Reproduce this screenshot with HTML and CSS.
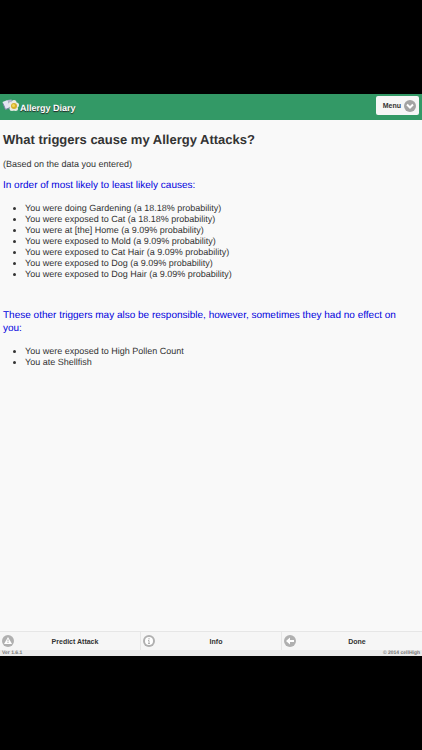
FILE: index.html
```
<!DOCTYPE html>
<html lang="en">
<head>
<meta charset="utf-8">
<meta name="viewport" content="width=device-width, initial-scale=1">
<title>Allergy Diary</title>
<link rel="stylesheet" href="styles.css">
</head>

<body>
<div class="page">
	<header class="header">
		<div class="brand">
			<svg class="logo" viewBox="0 0 34 28" aria-hidden="true">
				<path d="M1 6l10-4 6 14-10 5z" fill="#e4e6f3"/>
				<path d="M2 9l5 12 10-4" fill="none" stroke="#7f81a8" stroke-width="2"/>
				<path d="M11 2l8-1 3 12-6 4z" fill="#b7b3cf"/>
				<g fill="#e9ebe4">
					<circle cx="24" cy="7" r="5"/>
					<circle cx="29" cy="12" r="5"/>
					<circle cx="27" cy="19" r="5"/>
					<circle cx="20" cy="19" r="5"/>
					<circle cx="18" cy="11" r="5"/>
				</g>
				<circle cx="24" cy="14" r="6" fill="#d4b02a"/>
				<circle cx="23" cy="13" r="3" fill="#f2d95c"/>
			</svg>
			<span>Allergy Diary</span>
		</div>
		<button type="button" class="menu">
			<span>Menu</span>
			<svg class="icon" viewBox="0 0 24 24" aria-hidden="true">
				<circle cx="12" cy="12" r="12" fill="#a3a3a3"/>
				<path d="M6 9l6 6 6-6" fill="none" stroke="#fff" stroke-width="4"/>
			</svg>
		</button>
	</header>
	<main class="content">
		<h1>What triggers cause my Allergy Attacks?</h1>
		<p class="note">(Based on the data you entered)</p>
		<h2>In order of most likely to least likely causes:</h2>
		<ul class="likely">
			<li>You were doing Gardening (a 18.18% probability)</li>
			<li>You were exposed to Cat (a 18.18% probability)</li>
			<li>You were at [the] Home (a 9.09% probability)</li>
			<li>You were exposed to Mold (a 9.09% probability)</li>
			<li>You were exposed to Cat Hair (a 9.09% probability)</li>
			<li>You were exposed to Dog (a 9.09% probability)</li>
			<li>You were exposed to Dog Hair (a 9.09% probability)</li>
		</ul>
		<h2>These other triggers may also be responsible, however, sometimes they had no effect on you:</h2>
		<ul>
			<li>You were exposed to High Pollen Count</li>
			<li>You ate Shellfish</li>
		</ul>
	</main>
	<footer>
		<div class="navbar">
			<button type="button">
				<svg class="icon" viewBox="0 0 24 24" aria-hidden="true">
					<circle cx="12" cy="12" r="12" fill="#b0b0b0"/>
					<path d="M12 4l8 14H4z" fill="#fff"/>
					<path d="M12 9v4M12 14v2" stroke="#b0b0b0" stroke-width="2"/>
				</svg>
				<span>Predict Attack</span>
			</button>
			<button type="button">
				<svg class="icon" viewBox="0 0 24 24" aria-hidden="true">
					<circle cx="12" cy="12" r="12" fill="#b0b0b0"/>
					<circle cx="12" cy="12" r="8" fill="#fff"/>
					<path d="M12 6v3M10 11h2v6M10 17h4" fill="none" stroke="#b0b0b0" stroke-width="2"/>
				</svg>
				<span>Info</span>
			</button>
			<button type="button">
				<svg class="icon" viewBox="0 0 24 24" aria-hidden="true">
					<circle cx="12" cy="12" r="12" fill="#b0b0b0"/>
					<path d="M4 12l8-7v5h8v4h-8v5z" fill="#fff"/>
				</svg>
				<span>Done</span>
			</button>
		</div>
		<div class="legal">
			<span>Ver 1.6.1</span>
			<span>© 2014 cellHigh</span>
		</div>
	</footer>
</div>
</body>
</html>
```

FILE: styles.css
```
*{margin:0; padding:0; box-sizing:border-box;}
body{min-height:100vh; padding:94px 0; background:#000; color:#333; font:9px/11px "Liberation Sans",Arial,sans-serif; text-rendering:geometricPrecision; display:flex;}
button{border:0; background:none; color:#333; font:bold 7px/11px "Liberation Sans",Arial,sans-serif;}
.page{flex:1; min-width:0; background:#f9f9f9; display:flex; flex-direction:column;}
.icon{width:12px; height:12px; flex:none; display:block;}

.header{height:26px; padding:0 3px 0 2px; background:#339966; display:flex; align-items:center; justify-content:space-between;}
.brand{color:#fff; font-weight:bold; text-shadow:0 1px 1px #222; display:flex; align-items:center; gap:1px;}
.logo{width:17px; height:14px; margin-bottom:2px; display:block;}
.brand span{padding-top:3px;}
.menu{height:19px; padding:0 3px 0 7px; margin-bottom:3px; background:#f6f6f6; border-radius:2px; display:flex; align-items:center; gap:3px;}

.content{flex:1; padding:12px 8px 12px 3px;}
h1{font-size:13px; line-height:16px; margin-bottom:11px;}
.note{margin-bottom:9px;}
h2{color:#0000dd; font-size:10px; line-height:13px; font-weight:normal; margin-bottom:11px;}
ul{padding-left:22px;}
.likely{margin-bottom:29px;}

.navbar{background:#f6f6f6; border-top:1px solid #e6e6e6; display:flex;}
.navbar button{flex:1; height:18px; padding:0 4px 0 2px; display:flex; align-items:center;}
.navbar button+button{border-left:1px solid #e6e6e6;}
.navbar span{flex:1; text-align:center;}
.legal{height:6px; padding:0 2px; background:#e9e9e9; color:#777; font-size:5px; line-height:6px; font-weight:bold; display:flex; justify-content:space-between;}
```
